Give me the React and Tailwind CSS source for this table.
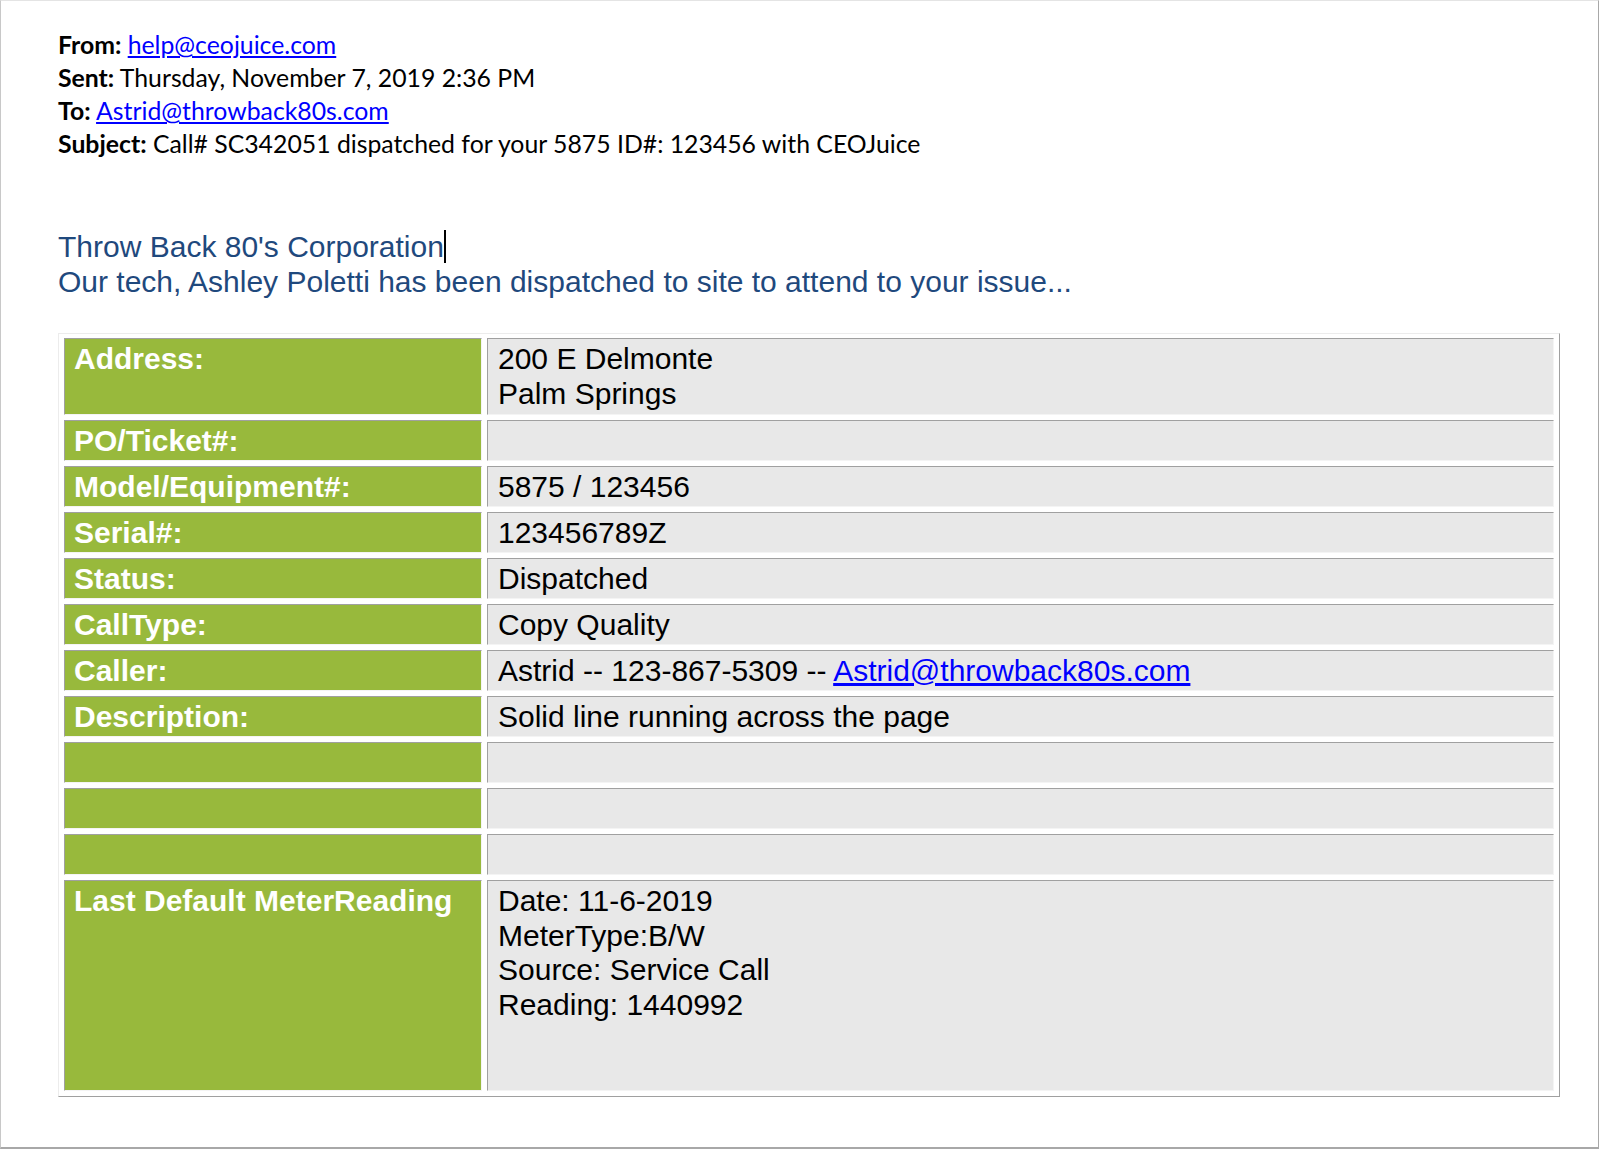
const rows = [
  { label: 'Address:', value: ['200 E Delmonte', 'Palm Springs'], tall: 'h-[77px]' },
  { label: 'PO/Ticket#:', value: [] },
  { label: 'Model/Equipment#:', value: ['5875 / 123456'] },
  { label: 'Serial#:', value: ['123456789Z'] },
  { label: 'Status:', value: ['Dispatched'] },
  { label: 'CallType:', value: ['Copy Quality'] },
  { label: 'Caller:', caller: true },
  { label: 'Description:', value: ['Solid line running across the page'] },
  { label: '', value: [] },
  { label: '', value: [] },
  { label: '', value: [] },
]

const meter = ['Date: 11-6-2019', 'MeterType:B/W', 'Source: Service Call', 'Reading: 1440992']

const cellBase =
  'border border-t-[#a0a0a0] border-l-[#a0a0a0] border-b-[#f4f4f4] border-r-[#f4f4f4] pt-[3px] pb-[1.5px] text-[30px] leading-[34.5px]'

function LabelCell({ children, tall }) {
  return (
    <div className={`${cellBase} bg-[#98b93c] text-white font-bold pl-[9px] ${tall || ''}`}>
      {children || '\u00a0'}
    </div>
  )
}

function ValueCell({ children, tall }) {
  return (
    <div className={`${cellBase} bg-[#e8e8e8] text-black pl-[10px] ${tall || ''}`}>
      {children}
    </div>
  )
}

export default function App() {
  return (
    <div className="w-[1600px] h-[1150px] bg-white">
      <div className="w-[1599px] h-[1149px] border-l border-t border-l-[#c8c8c8] border-t-[#e4e4e4] border-r border-r-[#a8a8a8] border-b-2 border-b-[#a8a8a8] pl-[57px] pt-[27px]">
        {/* header */}
        <div className="font-['Lato',sans-serif] text-[24.8px] leading-[33px] text-black">
          <div>
            <b>From:</b> <a href="#" className="text-[#0000ff] underline">help@ceojuice.com</a>
          </div>
          <div>
            <b>Sent:</b> Thursday, November 7, 2019 2:36 PM
          </div>
          <div>
            <b>To:</b> <a href="#" className="text-[#0000ff] underline">Astrid@throwback80s.com</a>
          </div>
          <div>
            <b>Subject:</b> Call# SC342051 dispatched for your 5875 ID#: 123456 with CEOJuice
          </div>
        </div>

        {/* intro */}
        <div className="mt-[70px] font-['Liberation_Sans',Arial,sans-serif] text-[30px] leading-[34.5px] text-[#1f497d]">
          <div>
            Throw Back 80's Corporation
            <span className="inline-block w-[2px] h-[33px] bg-black align-[-6px]" />
          </div>
          <div>Our tech, Ashley Poletti has been dispatched to site to attend to your issue...</div>
        </div>

        {/* details table */}
        <div className="mt-[34px] w-[1502px] border border-t-[#ececec] border-l-[#ececec] border-b-[#a0a0a0] border-r-[#a0a0a0] px-[5px] pt-[4px] pb-[5px] font-['Liberation_Sans',Arial,sans-serif]">
          <div className="grid grid-cols-[418px_1067px] gap-[5px]">
            {rows.map((r, i) => (
              <div key={i} className="contents">
                <LabelCell tall={r.tall}>{r.label}</LabelCell>
                <ValueCell tall={r.tall}>
                  {r.caller ? (
                    <span>
                      Astrid -- 123-867-5309 --{' '}
                      <a href="#" className="text-[#0000ff] underline">Astrid@throwback80s.com</a>
                    </span>
                  ) : r.value.length ? (
                    r.value.map(v => <div key={v}>{v}</div>)
                  ) : (
                    '\u00a0'
                  )}
                </ValueCell>
              </div>
            ))}
            <LabelCell tall="h-[211px]">Last Default MeterReading</LabelCell>
            <ValueCell tall="h-[211px]">
              {meter.map(m => <div key={m}>{m}</div>)}
            </ValueCell>
          </div>
        </div>
      </div>
    </div>
  )
}
